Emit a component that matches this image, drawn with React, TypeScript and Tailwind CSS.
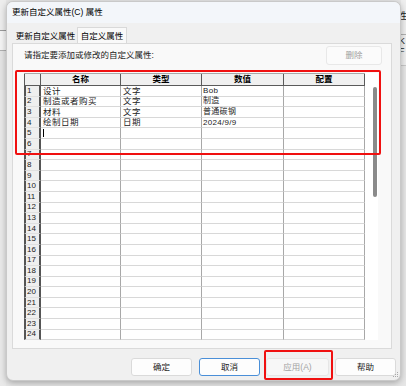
import React from 'react'

const rows = [
  { name: '设计', type: '文字', value: 'Bob' },
  { name: '制造或者购买', type: '文字', value: '制造' },
  { name: '材料', type: '文字', value: '普通碳钢' },
  { name: '绘制日期', type: '日期', value: '2024/9/9' },
]

const headers = ['名称', '类型', '数值', '配置']

const DialogButton = ({ label, focused, disabled }: { label: string; focused?: boolean; disabled?: boolean }) => (
  <div
    className={`flex h-[18px] items-center justify-center rounded-[3px] border text-[8.5px] ${
      focused
        ? 'border-[#4a8fd8] bg-[#fdfdfd] text-[#1a1a1a]'
        : disabled
          ? 'border-[#e6e6e6] bg-[#f7f7f7] text-[#a3a3a3]'
          : 'border-[#dadada] bg-[#fdfdfd] text-[#1a1a1a]'
    }`}
  >
    {label}
  </div>
)

const ResizeGrip = () => (
  <svg width="8" height="8" viewBox="0 0 8 8" className="absolute bottom-[1px] right-[1px]">
    <g fill="#a8a8a8">
      <rect x="6" y="1" width="1" height="1" />
      <rect x="4" y="3" width="1" height="1" />
      <rect x="6" y="3" width="1" height="1" />
      <rect x="2" y="5" width="1" height="1" />
      <rect x="4" y="5" width="1" height="1" />
      <rect x="6" y="5" width="1" height="1" />
    </g>
  </svg>
)

export default function App() {
  return (
    <div className="flex h-[386px] w-[406px] overflow-hidden bg-[#e6e6e6] font-['Liberation_Sans','Noto_Sans_CJK_SC',sans-serif] text-black">
      {/* window behind, left edge */}
      <div className="flex w-[6px] shrink-0 flex-col">
        <div className="h-[30px] bg-[#ededed]" />
        <div className="h-[20px] border-t border-[#9a9a9a] bg-[#f4f4f4]" />
        <div className="h-[40px] border-t border-[#b0b0b0] bg-[#e4e4e4]" />
        <div className="flex-1 bg-[#e9e9e9]" />
      </div>

      {/* dialog */}
      <div className="relative mt-[1px] flex h-[380px] w-[395px] shrink-0 flex-col overflow-hidden rounded-[7px] border border-[#c9c9c9] bg-[#f0f0f0] shadow-[0_2px_6px_rgba(0,0,0,0.28)]">
        <div className="flex h-[21px] items-center bg-[#f3f6fa] pl-[5px] text-[8.5px]">更新自定义属性(C) 属性</div>

        <div className="flex flex-1 flex-col">
          {/* tabs */}
          <div className="flex h-[20px] items-end pl-[7px]">
            <div className="flex h-[13px] w-[63px] items-center justify-center text-[8.5px]">更新自定义属性</div>
            <div className="relative -mb-px flex h-[17px] w-[50px] items-center justify-center border border-b-0 border-[#d9d9d9] bg-[#f9f9f9] text-[8.5px]">
              自定义属性
            </div>
          </div>

          {/* panel */}
          <div className="relative ml-[5px] flex h-[306px] w-[380px] flex-col border border-[#dadada] bg-[#f9f9f9]">
            <div className="flex h-[21px] items-center justify-between pl-[11px] pr-[9px] pt-[1px]">
              <span className="text-[8.5px] text-[#1a1a1a]">请指定要添加或修改的自定义属性:</span>
              <div className="flex h-[19px] w-[56px] items-center justify-center rounded-[3px] border border-[#e8e8e8] bg-[#fbfbfb] text-[8.5px] text-[#a0a0a0]">
                删除
              </div>
            </div>

            {/* grid */}
            <div className="ml-[11px] mt-[8px] flex h-[267px] w-[354px] bg-white">
              <div className="flex w-[341px] flex-col overflow-hidden">
                <div className="grid h-[13px] shrink-0 grid-cols-[17px_80px_81px_82px_81px] border-t border-[#a8a8a8]">
                  <div className="border-b border-l border-r border-[#5a5a5a] bg-[#f0f0f0]" />
                  {headers.map((h) => (
                    <div
                      key={h}
                      className="flex items-center justify-center border-b border-r border-[#5a5a5a] bg-[#f0f0f0] text-[8.5px] font-bold leading-none"
                    >
                      {h}
                    </div>
                  ))}
                </div>
                {Array.from({ length: 24 }, (_, i) => {
                  const r = rows[i]
                  return (
                    <div key={i} className="grid h-[10.6px] shrink-0 grid-cols-[17px_80px_81px_82px_81px]">
                      <div className="flex items-center border-b border-l-2 border-r-2 border-b-[#e0e0e0] border-l-[#555] border-r-[#555] bg-[#efefef] pl-[1px] text-[8px] leading-none text-[#222]">
                        {i + 1}
                      </div>
                      <div className="flex items-center border-b border-r border-b-[#d8d8d8] border-r-[#a8a8a8] pl-[2px] text-[8.5px] leading-none tracking-[0.5px] text-[#222]">
                        {r?.name}
                        {i === 4 && <span className="h-[8px] w-px bg-black" />}
                      </div>
                      <div className="flex items-center border-b border-r border-b-[#d8d8d8] border-r-[#a8a8a8] pl-[2px] text-[8.5px] leading-none tracking-[0.5px] text-[#222]">
                        {r?.type}
                      </div>
                      <div className="flex items-center border-b border-r border-b-[#d8d8d8] border-r-[#a8a8a8] pl-[1px] text-[8px] leading-none tracking-[0.3px] text-[#222]">
                        {r?.value}
                      </div>
                      <div className="border-b border-r border-b-[#d8d8d8] border-r-[#a8a8a8]" />
                    </div>
                  )
                })}
              </div>
              <div className="flex flex-1 pl-[8px] pt-[14px]">
                <div className="h-[110px] w-[4px] rounded-full bg-[#8a8a8a]" />
              </div>
            </div>

            {/* highlight */}
            <div className="absolute left-[2px] top-[26px] h-[85px] w-[366px] rounded-[2px] border-2 border-[#f01010]" />
          </div>

          {/* buttons */}
          <div className="flex justify-end gap-[6px] pr-[4px] pt-[9px]">
            <div className="w-[61px]">
              <DialogButton label="确定" />
            </div>
            <div className="ml-[1px] w-[61px]">
              <DialogButton label="取消" focused />
            </div>
            <div className="relative w-[63px]">
              <DialogButton label="应用(A)" disabled />
              <div className="absolute -bottom-[4px] -left-[2px] -right-[4px] -top-[8px] rounded-[2px] border-2 border-[#f01010]" />
            </div>
            <div className="w-[61px]">
              <DialogButton label="帮助" />
            </div>
          </div>
        </div>
        <ResizeGrip />
      </div>

      {/* window behind, right edge */}
      <div className="flex flex-1 flex-col overflow-hidden bg-[#eeeeee] pt-[12px] text-[9px] leading-none text-[#222]">
        <span className="-ml-[3px] h-[22px]">性</span>
        <span className="-ml-[2px] h-[13px] border-t border-[#b0b0b0] pt-[2px]">K</span>
        <span className="-ml-[2px] h-[12px]">F</span>
        <div className="mt-[6px] flex-1 border-t border-[#c8c8c8] bg-[#e6e6e6]" />
      </div>
    </div>
  )
}
